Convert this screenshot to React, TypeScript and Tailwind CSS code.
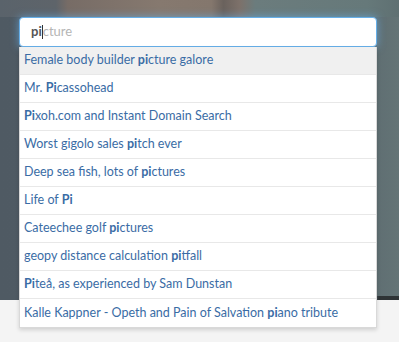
import React from "react";

const results: [string, string, string][] = [
  ["Female body builder ", "pi", "cture galore"],
  ["Mr. ", "Pi", "cassohead"],
  ["", "Pi", "xoh.com and Instant Domain Search"],
  ["Worst gigolo sales ", "pi", "tch ever"],
  ["Deep sea fish, lots of ", "pi", "ctures"],
  ["Life of ", "Pi", ""],
  ["Cateechee golf ", "pi", "ctures"],
  ["geopy distance calculation ", "pi", "tfall"],
  ["", "Pi", "teå, as experienced by Sam Dunstan"],
  ["Kalle Kappner - Opeth and Pain of Salvation ", "pi", "ano tribute"],
];

export default function App() {
  return (
    <div className="relative w-[399px] h-[342px] overflow-hidden bg-[#f4f4f4] font-['Lato','Noto_Sans',sans-serif]">
      {/* blurred photo behind the search box */}
      <div className="flex h-[300px] flex-col bg-[linear-gradient(90deg,#4f5a63_0%,#525d66_60%,#5f6e72_94%,#647476_100%)]">
        <div className="h-[17px] bg-[linear-gradient(90deg,#5a636b_0%,#5e646a_14%,#776c66_17%,#86796f_40%,#84776d_53%,#6a625d_56%,#7d716a_60%,#6b7c7d_64%,#66797a_92%,#5f7072_100%)]" />
        <div className="flex-1" />
        <div className="h-[4px] bg-[linear-gradient(90deg,#4f5a63_0%,#4f5a63_94%,#2f3436_95%,#2f3436_100%)]" />
      </div>

      <div className="absolute left-[19px] top-[17px] w-[358px]">
        {/* input with typeahead hint */}
        <div className="flex h-[30px] items-center rounded-[4px] border border-[#66afe9] bg-white pl-[11px] text-[13px] shadow-[0_0_8px_rgba(102,175,233,0.7)]">
          <span className="font-bold text-[#555]">pi</span>
          <span className="h-[14px] w-px bg-[#333]" />
          <span className="text-[#b5b5b5]">cture</span>
        </div>

        {/* suggestion menu */}
        <div className="border border-t-0 border-[#d9d9d9] bg-white shadow-[0_2px_4px_rgba(0,0,0,0.15)]">
          {results.map(([a, b, c], i) => (
            <div
              key={i}
              className={`flex h-[28px] items-center px-[4px] text-[12.5px] text-[#3a6ca5] ${
                i < results.length - 1 ? "border-b border-[#e8e8e8]" : ""
              } ${i === 0 ? "bg-[#f0f0f0]" : ""}`}
            >
              <span className="whitespace-pre">
                {a}
                <b className="font-bold">{b}</b>
                {c}
              </span>
            </div>
          ))}
        </div>
      </div>
    </div>
  );
}
